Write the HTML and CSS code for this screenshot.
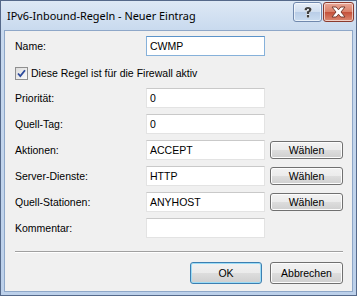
FILE: index.html
```html
<!DOCTYPE html>
<html lang="de">
<head>
    <meta charset="UTF-8">
    <title>IPv6-Inbound-Regeln - Neuer Eintrag</title>
    <link rel="stylesheet" href="styles.css">
</head>
<body>
    <div class="window">
        <div class="titlebar">
            <span class="title">IPv6-Inbound-Regeln - Neuer Eintrag</span>
            <div class="caption-buttons">
                <div class="cap-btn help">
                    <svg width="12" height="13" viewBox="0 0 12 13">
                        <path d="M2.5 4.2 Q2.5 1 6 1 Q9.5 1 9.5 3.8 Q9.5 5.4 7.2 6.4 L7.2 8 L4.8 8 L4.8 5.6 Q7.1 4.9 7.1 3.8 Q7.1 2.8 6 2.8 Q4.9 2.8 4.9 4.2 Z M4.8 9 L7.2 9 L7.2 11.5 L4.8 11.5 Z" fill="#404040" stroke="#ffffff" stroke-width="0.9" paint-order="stroke"/>
                    </svg>
                </div>
                <div class="cap-btn close">
                    <svg width="15" height="12" viewBox="0 0 15 12">
                        <path d="M1 1 L5.2 1 L7.5 3.8 L9.8 1 L14 1 L10 6 L14 11 L9.8 11 L7.5 8.2 L5.2 11 L1 11 L5 6 Z" fill="#ffffff" stroke="#6b3328" stroke-width="0.9"/>
                    </svg>
                </div>
            </div>
        </div>

        <div class="client">
            <div class="form">
                <div class="row">
                    <label class="label">Name:</label>
                    <div class="field focused">CWMP</div>
                </div>
                <div class="row check-row">
                    <span class="checkbox">
                        <svg width="9" height="9" viewBox="0 0 9 9">
                            <path d="M1 4.5 L3.3 7 L8 1.2" fill="none" stroke="#2c4a9c" stroke-width="1.8"/>
                        </svg>
                    </span>
                    <span class="check-text">Diese Regel ist für die Firewall aktiv</span>
                </div>
                <div class="row">
                    <label class="label">Priorität:</label>
                    <div class="field">0</div>
                </div>
                <div class="row">
                    <label class="label">Quell-Tag:</label>
                    <div class="field">0</div>
                </div>
                <div class="row">
                    <label class="label">Aktionen:</label>
                    <div class="field">ACCEPT</div>
                    <button class="btn small">Wählen</button>
                </div>
                <div class="row">
                    <label class="label">Server-Dienste:</label>
                    <div class="field">HTTP</div>
                    <button class="btn small">Wählen</button>
                </div>
                <div class="row">
                    <label class="label">Quell-Stationen:</label>
                    <div class="field">ANYHOST</div>
                    <button class="btn small">Wählen</button>
                </div>
                <div class="row">
                    <label class="label">Kommentar:</label>
                    <div class="field"></div>
                </div>
            </div>

            <div class="separator"></div>

            <div class="actions">
                <button class="btn default">OK</button>
                <button class="btn">Abbrechen</button>
            </div>
        </div>
    </div>
</body>
</html>
```

FILE: styles.css
```css
body {
    margin: 0;
    padding: 0;
    font-family: 'Liberation Sans', Arial, sans-serif;
    font-size: 10.5px;
    color: #000;
}

.window {
    width: 357px;
    height: 296px;
    box-sizing: border-box;
    border: 1px solid #55698a;
    background: linear-gradient(#dde8f5 0px, #c8d9ee 30px, #bcd0ea 100%);
    display: flex;
    flex-direction: column;
}

.titlebar {
    height: 29px;
    display: flex;
    align-items: flex-start;
    justify-content: space-between;
}

.title {
    font-family: 'Noto Sans', 'Open Sans', sans-serif;
    font-size: 10.9px;
    margin: 7px 0 0 6px;
    color: #000;
}

.caption-buttons {
    display: flex;
    gap: 1px;
    margin: 1px 2px 0 0;
}

.cap-btn {
    height: 18px;
    border: 1px solid #7088ad;
    border-radius: 3px;
    display: flex;
    align-items: center;
    justify-content: center;
    box-shadow: inset 0 0 0 1px rgba(255, 255, 255, 0.6);
}

.cap-btn.help {
    width: 27px;
    background: linear-gradient(#e6eef8 0%, #d0def0 50%, #b9cde7 51%, #cadcf0 100%);
}

.cap-btn.close {
    width: 29px;
    border-color: #8a3a2e;
    background: linear-gradient(#eaa898 0%, #d98068 50%, #c5503a 51%, #dc8a72 100%);
}

.client {
    flex: 1;
    margin: 0 3px 3px;
    background: #f0f0f0;
    border: 1px solid #8ea7c8;
    display: flex;
    flex-direction: column;
}

.form {
    display: flex;
    flex-direction: column;
    gap: 6px;
    padding: 5px 0 0 10px;
}

.row {
    display: flex;
    align-items: center;
    height: 20px;
}

.label {
    width: 131px;
}

.field {
    width: 119px;
    height: 20px;
    box-sizing: border-box;
    background: #fff;
    border: 1px solid #e3e3e3;
    border-top-color: #c9c9c9;
    padding: 3px 0 0 3px;
    line-height: 13px;
}

.field.focused {
    border-color: #86b1da;
    border-top-color: #5b93c9;
}

.check-row {
    align-items: flex-start;
    padding-top: 5px;
    height: 15px;
}

.checkbox {
    width: 13px;
    height: 13px;
    box-sizing: border-box;
    border: 1px solid #8f8f8f;
    background: linear-gradient(135deg, #dcdcdc, #fbfbfb);
    display: flex;
    align-items: center;
    justify-content: center;
    margin-right: 3px;
}

.check-text {
    line-height: 13px;
}

.btn {
    font-family: 'Liberation Sans', Arial, sans-serif;
    font-size: 10.5px;
    color: #000;
    width: 73px;
    height: 22px;
    padding: 0;
    border: 1px solid #707070;
    border-radius: 3px;
    background: linear-gradient(#f2f2f2 0%, #ebebeb 50%, #dddddd 51%, #cfcfcf 100%);
    box-shadow: inset 0 0 0 1px #fcfcfc;
}

.btn.small {
    height: 18px;
    margin-left: 5px;
    line-height: 14px;
}

.btn.default {
    border-color: #3c7fb1;
    box-shadow: inset 0 0 0 1px #9cdcf6;
    width: 72px;
}

.separator {
    margin: 13px 9px 0 10px;
    border-top: 1px solid #a0a0a0;
    border-bottom: 1px solid #fff;
}

.actions {
    display: flex;
    justify-content: flex-end;
    gap: 8px;
    padding: 9px 9px 0 0;
}
```
